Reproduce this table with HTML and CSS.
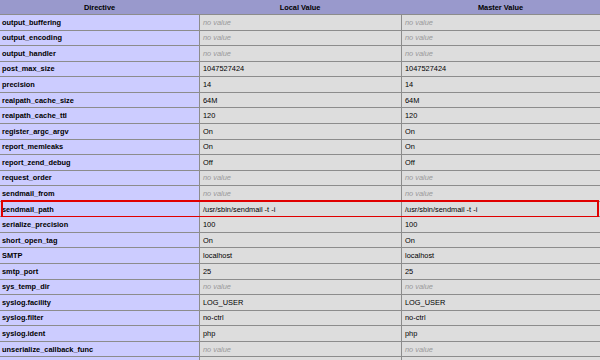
FILE: index.html
```html
<!DOCTYPE html>
<html>
<head>
<meta charset="utf-8">
<link rel="stylesheet" href="styles.css">
</head>
<body>
<div class="table">
  <div class="row head"><div>Directive</div><div>Local Value</div><div>Master Value</div></div>
  <div class="row"><div class="e">output_buffering</div><div class="v"><i>no value</i></div><div class="v"><i>no value</i></div></div>
  <div class="row"><div class="e">output_encoding</div><div class="v"><i>no value</i></div><div class="v"><i>no value</i></div></div>
  <div class="row"><div class="e">output_handler</div><div class="v"><i>no value</i></div><div class="v"><i>no value</i></div></div>
  <div class="row"><div class="e">post_max_size</div><div class="v">1047527424</div><div class="v">1047527424</div></div>
  <div class="row"><div class="e">precision</div><div class="v">14</div><div class="v">14</div></div>
  <div class="row"><div class="e">realpath_cache_size</div><div class="v">64M</div><div class="v">64M</div></div>
  <div class="row"><div class="e">realpath_cache_ttl</div><div class="v">120</div><div class="v">120</div></div>
  <div class="row"><div class="e">register_argc_argv</div><div class="v">On</div><div class="v">On</div></div>
  <div class="row"><div class="e">report_memleaks</div><div class="v">On</div><div class="v">On</div></div>
  <div class="row"><div class="e">report_zend_debug</div><div class="v">Off</div><div class="v">Off</div></div>
  <div class="row"><div class="e">request_order</div><div class="v"><i>no value</i></div><div class="v"><i>no value</i></div></div>
  <div class="row"><div class="e">sendmail_from</div><div class="v"><i>no value</i></div><div class="v"><i>no value</i></div></div>
  <div class="row marked"><div class="e">sendmail_path</div><div class="v">/usr/sbin/sendmail -t -i</div><div class="v">/usr/sbin/sendmail -t -i</div></div>
  <div class="row"><div class="e">serialize_precision</div><div class="v">100</div><div class="v">100</div></div>
  <div class="row"><div class="e">short_open_tag</div><div class="v">On</div><div class="v">On</div></div>
  <div class="row"><div class="e">SMTP</div><div class="v">localhost</div><div class="v">localhost</div></div>
  <div class="row"><div class="e">smtp_port</div><div class="v">25</div><div class="v">25</div></div>
  <div class="row"><div class="e">sys_temp_dir</div><div class="v"><i>no value</i></div><div class="v"><i>no value</i></div></div>
  <div class="row"><div class="e">syslog.facility</div><div class="v">LOG_USER</div><div class="v">LOG_USER</div></div>
  <div class="row"><div class="e">syslog.filter</div><div class="v">no-ctrl</div><div class="v">no-ctrl</div></div>
  <div class="row"><div class="e">syslog.ident</div><div class="v">php</div><div class="v">php</div></div>
  <div class="row"><div class="e">unserialize_callback_func</div><div class="v"><i>no value</i></div><div class="v"><i>no value</i></div></div>
  <div class="row"><div class="e"></div><div class="v"></div><div class="v"></div></div>
</div>
</body>
</html>
```
FILE: styles.css
```css
html, body {
  margin: 0;
  padding: 0;
  width: 600px;
  height: 360px;
  overflow: hidden;
  background: #fff;
}
.table {
  display: flex;
  flex-direction: column;
  row-gap: 1px;
  background: #8c8c8c;
  width: 600px;
  font-family: "Liberation Sans", Arial, sans-serif;
  font-size: 7.4px;
  color: #000;
}
.row {
  display: grid;
  grid-template-columns: 199px 201px 198px;
  column-gap: 1px;
  height: 14.57px;
  background: #8c8c8c;
  position: relative;
}
.row > div {
  display: flex;
  align-items: center;
  padding: 0 3px;
  white-space: nowrap;
  overflow: hidden;
}
.row.head {
  height: 14px;
  background: #9999cc;
  column-gap: 0;
  grid-template-columns: 199px 202px 199px;
}
.row.head > div {
  justify-content: center;
  font-weight: bold;
  background: #9999cc;
  color: #000;
}
.e {
  background: #ccccff;
  font-weight: bold;
  color: #000;
  padding-left: 2px !important;
}
.v {
  background: #dddddd;
  color: #000;
}
.v i {
  color: #999;
}
.marked::after {
  content: "";
  position: absolute;
  left: 1px;
  right: 1px;
  top: -2px;
  bottom: -2px;
  border: 2px solid #e00000;
}
```
